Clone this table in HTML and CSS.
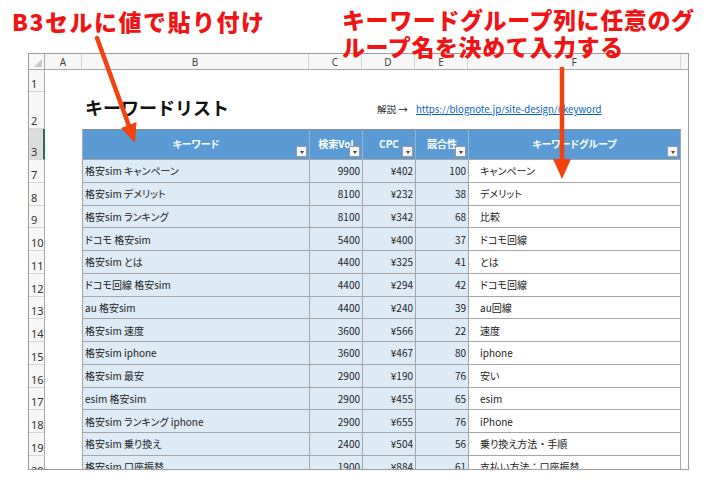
FILE: index.html
```html
<!DOCTYPE html>
<html lang="ja">
<head>
<meta charset="utf-8">
<title>キーワードリスト</title>
<link rel="stylesheet" href="styles.css">
</head>
<body>
<div class="page">
  <div class="sheet">
    <div class="ch corner"><span class="corner-tri"></span></div>
    <div class="ch">A</div>
    <div class="ch">B</div>
    <div class="ch">C</div>
    <div class="ch">D</div>
    <div class="ch">E</div>
    <div class="ch">F</div>
    <div class="ch last"></div>

    <div class="rh">1</div>
    <div class="c span7"></div>

    <div class="rh">2</div>
    <div class="c"></div>
    <div class="c title span2">キーワードリスト</div>
    <div class="c link-cell span4">解説 → <a class="link" href="#keyword">https://blognote.jp/site-design/#keyword</a></div>

    <div class="rh sel">3</div>
    <div class="c"></div>
    <div class="th">キーワード<span class="dd"></span></div>
    <div class="th">検索Vol<span class="dd"></span></div>
    <div class="th">CPC<span class="dd"></span></div>
    <div class="th">競合性<span class="dd"></span></div>
    <div class="th last-col">キーワードグループ<span class="dd"></span></div>
    <div class="c"></div>

    <div class="rh">7</div><div class="c"></div>
    <div class="td">格安sim キャンペーン</div><div class="td num">9900</div><div class="td num">¥402</div><div class="td num">100</div><div class="td grp">キャンペーン</div><div class="c"></div>

    <div class="rh">8</div><div class="c"></div>
    <div class="td">格安sim デメリット</div><div class="td num">8100</div><div class="td num">¥232</div><div class="td num">38</div><div class="td grp">デメリット</div><div class="c"></div>

    <div class="rh">9</div><div class="c"></div>
    <div class="td">格安sim ランキング</div><div class="td num">8100</div><div class="td num">¥342</div><div class="td num">68</div><div class="td grp">比較</div><div class="c"></div>

    <div class="rh">10</div><div class="c"></div>
    <div class="td">ドコモ 格安sim</div><div class="td num">5400</div><div class="td num">¥400</div><div class="td num">37</div><div class="td grp">ドコモ回線</div><div class="c"></div>

    <div class="rh">11</div><div class="c"></div>
    <div class="td">格安sim とは</div><div class="td num">4400</div><div class="td num">¥325</div><div class="td num">41</div><div class="td grp">とは</div><div class="c"></div>

    <div class="rh">12</div><div class="c"></div>
    <div class="td">ドコモ回線 格安sim</div><div class="td num">4400</div><div class="td num">¥294</div><div class="td num">42</div><div class="td grp">ドコモ回線</div><div class="c"></div>

    <div class="rh">13</div><div class="c"></div>
    <div class="td">au 格安sim</div><div class="td num">4400</div><div class="td num">¥240</div><div class="td num">39</div><div class="td grp">au回線</div><div class="c"></div>

    <div class="rh">14</div><div class="c"></div>
    <div class="td">格安sim 速度</div><div class="td num">3600</div><div class="td num">¥566</div><div class="td num">22</div><div class="td grp">速度</div><div class="c"></div>

    <div class="rh">15</div><div class="c"></div>
    <div class="td">格安sim iphone</div><div class="td num">3600</div><div class="td num">¥467</div><div class="td num">80</div><div class="td grp">iphone</div><div class="c"></div>

    <div class="rh">16</div><div class="c"></div>
    <div class="td">格安sim 最安</div><div class="td num">2900</div><div class="td num">¥190</div><div class="td num">76</div><div class="td grp">安い</div><div class="c"></div>

    <div class="rh">17</div><div class="c"></div>
    <div class="td">esim 格安sim</div><div class="td num">2900</div><div class="td num">¥455</div><div class="td num">65</div><div class="td grp">esim</div><div class="c"></div>

    <div class="rh">18</div><div class="c"></div>
    <div class="td">格安sim ランキング iphone</div><div class="td num">2900</div><div class="td num">¥655</div><div class="td num">76</div><div class="td grp">iPhone</div><div class="c"></div>

    <div class="rh">19</div><div class="c"></div>
    <div class="td">格安sim 乗り換え</div><div class="td num">2400</div><div class="td num">¥504</div><div class="td num">56</div><div class="td grp">乗り換え方法<span class="fw">・</span>手順</div><div class="c"></div>

    <div class="rh">20</div><div class="c"></div>
    <div class="td">格安sim 口座振替</div><div class="td num">1900</div><div class="td num">¥884</div><div class="td num">61</div><div class="td grp">支払い方法<span class="fw">：</span>口座振替</div><div class="c"></div>
  </div>

  <div class="note note-left">B3セルに値で貼り付け</div>
  <div class="note note-right">キーワードグループ列に任意のグ<br>ループ名を決めて入力する</div>

  <svg class="arrows" width="720" height="480" viewBox="0 0 720 480" aria-hidden="true">
    <line x1="97" y1="38" x2="129" y2="126" stroke="#f2420f" stroke-width="4.5" stroke-linecap="round"/>
    <polygon points="136.5,122 121,128 135,143" fill="#f2420f"/>
    <line x1="562" y1="67" x2="562" y2="162" stroke="#f2420f" stroke-width="4.5"/>
    <polygon points="553,159 571,159 562,179" fill="#f2420f"/>
  </svg>
</div>
</body>
</html>
```

FILE: styles.css
```css
* { box-sizing: border-box; }

html, body {
  margin: 0;
  padding: 0;
  background: #ffffff;
}

.page {
  position: relative;
  width: 720px;
  height: 480px;
  overflow: hidden;
  font-family: "Noto Sans CJK JP", "Noto Sans", sans-serif;
}

.sheet {
  margin: 53px 0 0 28px;
  width: 661px;
  height: 417px;
  border: 1px solid #9c9c9c;
  overflow: hidden;
  display: grid;
  grid-template-columns: 16px 37px 227px 53px 53px 53px 213px 7px;
  grid-template-rows: 16px 22px 37px 31px repeat(14, 22.75px);
  background: #ffffff;
}

/* column headers */
.ch {
  background: #f7f7f7;
  border-right: 1px solid #d6d6d6;
  border-bottom: 1px solid #a9a9a9;
  font-family: "Noto Sans", "Liberation Sans", sans-serif;
  font-size: 10px;
  color: #444;
  display: flex;
  align-items: center;
  justify-content: center;
  line-height: 1;
}
.ch.last { border-right: none; }
.ch.corner {
  position: relative;
  border-right-color: #a9a9a9;
}
.corner-tri {
  position: absolute;
  right: 2px;
  bottom: 2px;
  width: 0;
  height: 0;
  border-left: 8px solid transparent;
  border-bottom: 8px solid #c9c9c9;
}

/* row headers */
.rh {
  background: #f7f7f7;
  border-right: 1px solid #a9a9a9;
  border-bottom: 1px solid #d6d6d6;
  font-family: "Noto Sans", "Liberation Sans", sans-serif;
  font-size: 11px;
  color: #333;
  display: flex;
  align-items: flex-end;
  padding: 0 0 2px 2px;
  line-height: 1;
  white-space: nowrap;
}
.rh.sel {
  background: #dcdcdc;
  border-right: 2px solid #217346;
}

.c { min-width: 0; }
.span7 { grid-column: span 7; }
.span2 { grid-column: span 2; }
.span4 { grid-column: span 4; }

.title {
  display: flex;
  align-items: flex-start;
  padding: 5px 0 0 3px;
  font-size: 18px;
  line-height: 20px;
  font-weight: 700;
  color: #111;
  white-space: nowrap;
}

.link-cell {
  display: flex;
  align-items: flex-start;
  gap: 8px;
  padding: 11px 0 0 15px;
  font-size: 9.6px;
  line-height: 12px;
  color: #222;
  white-space: nowrap;
}
.link {
  color: #0563c1;
  text-decoration: underline;
}

/* table header */
.th {
  position: relative;
  background: #5b9bd5;
  color: #ffffff;
  font-size: 10px;
  font-weight: 700;
  font-feature-settings: "palt";
  border-top: 1px solid #8a8a8a;
  border-left: 1px solid #9cb2c8;
  border-bottom: 1px solid #a6a6a6;
  display: flex;
  align-items: center;
  justify-content: center;
  padding-bottom: 2px;
  white-space: nowrap;
}
.th.last-col { border-right: 1px solid #a6a6a6; }

.dd {
  position: absolute;
  right: 2px;
  bottom: 2px;
  width: 11px;
  height: 11px;
  background: #f4f4f4;
  border: 1px solid #9a9a9a;
}
.dd::after {
  content: "";
  position: absolute;
  left: 2.5px;
  top: 3.5px;
  border-left: 2.5px solid transparent;
  border-right: 2.5px solid transparent;
  border-top: 3px solid #444;
}

/* table body */
.td {
  background: #ddebf7;
  border-left: 1px solid #a6a6a6;
  border-bottom: 1px solid #a6a6a6;
  font-size: 10px;
  font-feature-settings: "palt";
  color: #222;
  display: flex;
  align-items: center;
  padding: 0 2px;
  white-space: nowrap;
  overflow: hidden;
}
.td.num { justify-content: flex-end; }
.td.grp {
  background: #ffffff;
  border-right: 1px solid #a6a6a6;
  padding-left: 11px;
}
.fw { font-feature-settings: normal; }

/* annotations */
.note {
  position: absolute;
  color: #f01414;
  font-family: "Noto Sans CJK JP", sans-serif;
  font-weight: 900;
  font-size: 23px;
  line-height: 27px;
  white-space: nowrap;
}
.note-left {
  left: 12px;
  top: 8px;
  letter-spacing: 1.5px;
}
.note-right {
  left: 342px;
  top: 6px;
  letter-spacing: 0.6px;
}

.arrows {
  position: absolute;
  left: 0;
  top: 0;
  pointer-events: none;
}
```
